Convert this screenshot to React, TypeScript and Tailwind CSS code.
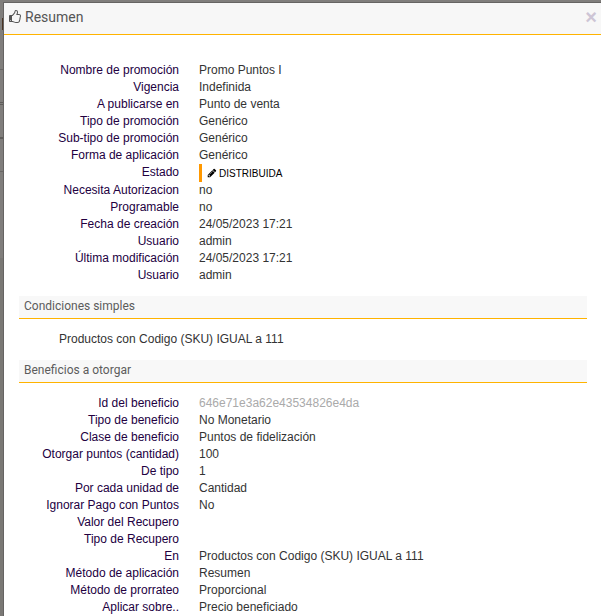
import type { ReactNode } from "react";

type Row = { label: string; value: ReactNode };

function ThumbsUpIcon() {
  return (
    <svg viewBox="0 0 1792 1792" className="size-[14px] shrink-0" fill="currentColor" aria-hidden="true">
      <path d="M384 1344q0-26-19-45t-45-19-45 19-19 45 19 45 45 19 45-19 19-45zm1152-576q0-51-39-89.500t-89-38.500h-352q0-58 48-159.500t48-160.500q0-98-32-145t-128-47q-26 26-38 85t-30.500 125.500-59.500 109.500q-22 23-77 91-4 5-23 30t-31.500 41-34.500 42.500-40 44-38.500 35.500-40 27-35.500 9h-32v640h32q13 0 31.500 3t33 6.500 38 11 35 11.500 35.500 12.500 29 10.500q211 73 342 73h121q192 0 192-167 0-26-5-56 30-16 47.500-52.500t17.500-73.500-18-69q53-50 53-119 0-25-10-55.500t-25-47.500q32-1 53.500-47t21.500-81zm128-1q0 89-49 163 9 33 9 69 0 77-38 144 3 21 3 43 0 101-60 178 1 139-85 219.500t-227 80.500h-129q-96 0-189.500-22.500t-216.500-65.500q-116-40-138-40h-288q-53 0-90.500-37.500t-37.500-90.500v-640q0-53 37.500-90.500t90.500-37.500h274q36-24 137-155 58-75 107-128 24-25 35.500-85.500t30.500-126.500 62-108q39-37 90-37 84 0 151 32.500t102 101.500 35 186q0 93-48 192h176q104 0 180 76t76 179z" />
    </svg>
  );
}

function PencilIcon() {
  return (
    <svg viewBox="0 0 1792 1792" className="size-[10px] shrink-0" fill="currentColor" aria-hidden="true">
      <path d="M491 1536l91-91-235-235-91 91v107h128v128h107zm523-928q0-22-22-22-10 0-17 7l-542 542q-7 7-7 17 0 22 22 22 10 0 17-7l542-542q7-7 7-17zm-54-192l416 416-832 832h-416v-416zm683 96q0 53-37 90l-166 166-416-416 166-165q36-38 90-38 53 0 91 38l235 234q37 39 37 91z" />
    </svg>
  );
}

const summary: Row[] = [
  { label: "Nombre de promoción", value: "Promo Puntos I" },
  { label: "Vigencia", value: "Indefinida" },
  { label: "A publicarse en", value: "Punto de venta" },
  { label: "Tipo de promoción", value: "Genérico" },
  { label: "Sub-tipo de promoción", value: "Genérico" },
  { label: "Forma de aplicación", value: "Genérico" },
  {
    label: "Estado",
    value: (
      <span className="flex h-[18px] items-center border-l-3 border-[#ff9800] pl-[5px] text-[10px] text-black">
        <PencilIcon />
        <span className="ml-0.5">DISTRIBUIDA</span>
      </span>
    ),
  },
  { label: "Necesita Autorizacion", value: "no" },
  { label: "Programable", value: "no" },
  { label: "Fecha de creación", value: "24/05/2023 17:21" },
  { label: "Usuario", value: "admin" },
  { label: "Última modificación", value: "24/05/2023 17:21" },
  { label: "Usuario", value: "admin" },
];

const benefits: Row[] = [
  { label: "Id del beneficio", value: <span className="text-[#aaaaaa]">646e71e3a62e43534826e4da</span> },
  { label: "Tipo de beneficio", value: "No Monetario" },
  { label: "Clase de beneficio", value: "Puntos de fidelización" },
  { label: "Otorgar puntos (cantidad)", value: "100" },
  { label: "De tipo", value: "1" },
  { label: "Por cada unidad de", value: "Cantidad" },
  { label: "Ignorar Pago con Puntos", value: "No" },
  { label: "Valor del Recupero", value: "" },
  { label: "Tipo de Recupero", value: "" },
  { label: "En", value: "Productos con Codigo (SKU) IGUAL a 111" },
  { label: "Método de aplicación", value: "Resumen" },
  { label: "Método de prorrateo", value: "Proporcional" },
  { label: "Aplicar sobre..", value: "Precio beneficiado" },
];

function Details({ rows }: { rows: Row[] }) {
  return (
    <dl>
      {rows.map((row, i) => (
        <div key={i} className="grid grid-cols-[160px_1fr] gap-5">
          <dt className="text-right text-[#22003f]">{row.label}</dt>
          <dd className="min-h-[17px]">{row.value}</dd>
        </div>
      ))}
    </dl>
  );
}

function SectionTitle({ children }: { children: ReactNode }) {
  return (
    <h3 className="h-[23px] border-b border-[#ffb300] bg-[#f8f8f8] px-[5px] font-[Roboto,sans-serif] text-xs leading-5 text-[#5c5c5c]">
      {children}
    </h3>
  );
}

function PageEdge() {
  return (
    <div className="flex w-[3px] shrink-0 flex-col bg-[#7a7875]" aria-hidden="true">
      <div className="h-4 bg-[#807e7c]" />
      <div className="h-3 border-r border-[#4a3525] bg-[#807e7c]" />
      <div className="h-10 border-b border-[#696765] bg-[#807e7c]" />
      <div className="h-[33px] border-b border-[#5f5d5b] bg-[#807e7c]" />
      <div className="h-0.5 border-b border-[#5f5d5b] bg-[#807e7c]" />
      <div className="h-[34px] border-b-2 border-[#5f5d5b] bg-[#807e7c]" />
      <div className="h-[33px] border-b border-[#696765] bg-[#807e7c]" />
      <div className="h-[86px] bg-[#807e7c]" />
    </div>
  );
}

export default function App() {
  return (
    <div className="flex h-screen flex-col overflow-hidden bg-[#807e7c] pt-0.5 font-['Liberation_Sans',Arial,sans-serif] text-xs leading-[17px] text-[#333333]">
      <div className="flex min-h-0 flex-1">
        <PageEdge />
        <section
          role="dialog"
          aria-labelledby="title"
          className="min-w-0 flex-1 overflow-hidden border-t border-l border-[#666463] bg-white"
        >
          <header className="flex h-8 items-center justify-between border-b border-[#ffb300] bg-[#f7f7f7] pr-1 pb-1 pl-1">
            <h2
              id="title"
              className="flex items-center gap-[3px] font-[Roboto,sans-serif] text-sm leading-5 text-[#555555]"
            >
              <ThumbsUpIcon />
              Resumen
            </h2>
            <button
              type="button"
              aria-label="Cerrar"
              className="text-xl leading-5 font-bold text-[#cdc5d5]"
            >
              ×
            </button>
          </header>
          <div className="pt-[27px] pr-[14px] pl-[15px]">
            <Details rows={summary} />
            <div className="pt-3">
              <SectionTitle>Condiciones simples</SectionTitle>
              <p className="pt-3 pb-3 pl-10">Productos con Codigo (SKU) IGUAL a 111</p>
            </div>
            <SectionTitle>Beneficios a otorgar</SectionTitle>
            <div className="pt-3">
              <Details rows={benefits} />
            </div>
          </div>
        </section>
      </div>
    </div>
  );
}
